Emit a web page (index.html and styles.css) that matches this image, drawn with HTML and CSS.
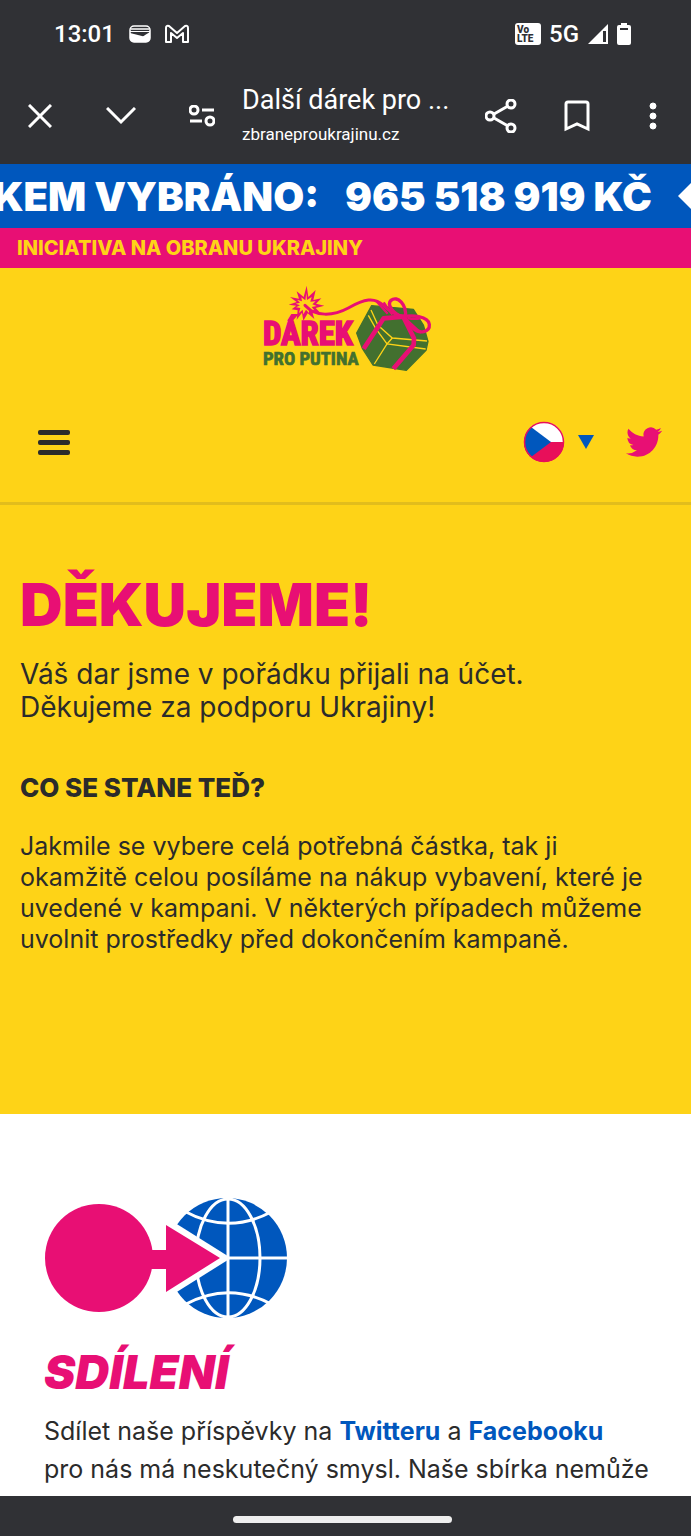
FILE: index.html
```html
<!DOCTYPE html>
<html lang="cs">
<head>
  <meta charset="UTF-8">
  <meta name="viewport" content="width=device-width, initial-scale=1">
  <title>Další dárek pro Putina</title>
  <link rel="stylesheet" href="styles.css">
</head>
<body>

  <!-- Status bar -->
  <div class="status-bar">
    <div class="status-left">
      <span class="clock">13:01</span>
      <svg width="22" height="18" viewBox="0 0 22 18">
        <rect x="1" y="1" width="20" height="16" rx="4" fill="none" stroke="#fff" stroke-width="1.5"/>
        <path d="M2 4h18" stroke="#fff" stroke-width="1.5"/>
        <path d="M1 8l12 3q2 .5 3-1l5-3v6q0 4-4 4H5q-4 0-4-4z" fill="#fff"/>
        <path d="M1 6.5h20" stroke="#fff" stroke-width="1"/>
      </svg>
      <svg width="24" height="20" viewBox="0 0 24 20">
        <path d="M1 18V4q0-3 3-2l8 7 8-7q3-1 3 2v14h-5V9l-6 5-6-5v9z" fill="none" stroke="#fff" stroke-width="2" stroke-linejoin="round"/>
      </svg>
    </div>
    <div class="status-right">
      <span class="volte">Vo<br>LTE</span>
      <span class="network">5G</span>
      <svg width="22" height="22" viewBox="0 0 22 22">
        <path d="M21 1v20H1z" fill="#fff"/>
        <path d="M16 8h3v11h-3z" fill="#303135"/>
      </svg>
      <svg width="14" height="22" viewBox="0 0 14 22">
        <path d="M4 0h6v2h2q2 0 2 2v16q0 2-2 2H2q-2 0-2-2V4q0-2 2-2h2z" fill="#fff"/>
        <path d="M3 6h8" stroke="#303135" stroke-width="2"/>
      </svg>
    </div>
  </div>

  <!-- Browser toolbar -->
  <div class="toolbar">
    <button class="tool-btn" aria-label="Zavřít">
      <svg width="24" height="24" viewBox="0 0 24 24"><path d="M1 1l22 22M23 1L1 23"/></svg>
    </button>
    <button class="tool-btn" aria-label="Minimalizovat">
      <svg width="30" height="18" viewBox="0 0 30 18"><path d="M1 1l14 14L29 1"/></svg>
    </button>
    <button class="tool-btn" aria-label="Informace o webu">
      <svg width="26" height="22" viewBox="0 0 26 22"><circle cx="5" cy="5" r="4"/><path d="M13 5h12M1 16h12"/><circle cx="21" cy="16" r="4"/></svg>
    </button>
    <div class="page-info">
      <div class="page-title">Další dárek pro ...</div>
      <div class="page-url">zbraneproukrajinu.cz</div>
    </div>
    <div class="actions">
      <button class="tool-btn" aria-label="Sdílet">
        <svg width="32" height="34" viewBox="0 0 32 34"><path d="M9 15l14-8M9 19l14 8"/><circle cx="5" cy="17" r="4"/><circle cx="26" cy="5" r="4"/><circle cx="26" cy="29" r="4"/></svg>
      </button>
      <button class="tool-btn" aria-label="Záložka">
        <svg width="26" height="32" viewBox="0 0 26 32"><path d="M2 29V4q0-2 2-2h18q2 0 2 2v25l-11-5z"/></svg>
      </button>
      <button class="tool-btn menu-dots" aria-label="Další možnosti">
        <svg width="8" height="28" viewBox="0 0 8 28"><circle cx="4" cy="4" r="3"/><circle cx="4" cy="14" r="3"/><circle cx="4" cy="24" r="3"/></svg>
      </button>
    </div>
  </div>

  <div class="ticker">
    <span>CELKEM VYBRÁNO:</span>
    <span>965 518 919 KČ</span>
    <svg class="diamond" width="28" height="28" viewBox="0 0 28 28"><path d="M14 0l14 14-14 14L0 14z" fill="#fff"/></svg>
  </div>
  <div class="initiative">INICIATIVA NA OBRANU UKRAJINY</div>

  <header class="header">
    <a href="#" class="logo" aria-label="Dárek pro Putina">
      <svg width="190" height="105" viewBox="0 0 570 315">
        <!-- gift box -->
        <path d="M362 92L487 103 517 150 531 199 525 226 466 286 366 270 334 220 317 174z" fill="#42702f" stroke="#42702f" stroke-width="4" stroke-linejoin="round"/>
        <g fill="none" stroke="#fed317" stroke-width="4">
          <path d="M360 105L381 151 424 189 528 198M352 121L374 160 408 207 524 222"/>
          <path d="M424 189L408 207 370 267M381 148L398 130"/>
        </g>
        <g fill="none" stroke="#e80f74" stroke-linejoin="round">
          <path d="M338 221L398 130 457 125 489 190 488 210 427 281" stroke-width="14"/>
          <path d="M164 93C192 125 246 124 292 99C340 72 370 65 398 92Q420 115 456 125" stroke-width="9"/>
          <path d="M454 125C425 116 407 88 420 76C440 60 468 90 463 126M457 126C480 119 532 123 535 148C537 172 505 178 485 159C475 150 468 137 457 126" stroke-width="10"/>
          <path d="M375 77L410 116M398 82L424 119M460 128L510 174M469 129Q490 134 507 130" stroke-width="7"/>
        </g>
        <!-- spark -->
        <path d="M167 32L172 66 194 45 187 75 211 70 195 86 220 92 194 99 213 119 184 111 190 132 170 115 157 137 153 113 137 134 140 106 122 103 136 92 113 89 137 81 117 66 144 71 137 49 158 66z" fill="#e80f74"/>
        <path d="M166 54L168 75 182 66 178 80 194 79 184 88 197 93 182 96 190 106 174 102 174 114 165 104 157 118 155 104 144 114 148 99 135 97 147 91 134 86 147 83 138 74 153 79 151 67 163 76z" fill="#fed317"/>
        <path d="M162 91L183 110" stroke="#e80f74" stroke-width="9" stroke-linecap="round"/>
        <text x="36" y="211" class="logo-top">DÁREK</text>
        <text x="36" y="270" class="logo-bottom">PRO PUTINA</text>
      </svg>
    </a>
    <nav class="nav">
      <button class="hamburger" aria-label="Menu"><i></i><i></i><i></i></button>
      <div class="nav-right">
        <button class="lang" aria-label="Jazyk: čeština">
          <svg width="42" height="42" viewBox="0 0 42 42">
            <clipPath id="flag"><circle cx="21" cy="21" r="20"/></clipPath>
            <g clip-path="url(#flag)">
              <path d="M0 0h42v21H0z" fill="#fff"/>
              <path d="M0 21h42v21H0z" fill="#e80f5a"/>
              <path d="M0 0L28 21 0 42z" fill="#0057bd"/>
            </g>
            <circle cx="21" cy="21" r="19.5" fill="none" stroke="#e80f5a" stroke-width="1.5"/>
          </svg>
          <svg width="16" height="14" viewBox="0 0 16 14"><path d="M0 0h16L8 14z" fill="#0057bd"/></svg>
        </button>
        <a href="#" class="twitter" aria-label="Twitter">
          <svg width="36" height="36" viewBox="0 0 24 24"><path fill="#e80f74" d="M23.953 4.57a10 10 0 01-2.825.775 4.958 4.958 0 002.163-2.723c-.951.555-2.005.959-3.127 1.184a4.92 4.92 0 00-8.384 4.482C7.69 8.095 4.067 6.13 1.64 3.162a4.822 4.822 0 00-.666 2.475c0 1.71.87 3.213 2.188 4.096a4.904 4.904 0 01-2.228-.616v.06a4.923 4.923 0 003.946 4.827 4.996 4.996 0 01-2.212.085 4.936 4.936 0 004.604 3.417 9.867 9.867 0 01-6.102 2.105c-.39 0-.779-.023-1.17-.067a13.995 13.995 0 007.557 2.209c9.053 0 13.998-7.496 13.998-13.985 0-.21 0-.42-.015-.63A9.935 9.935 0 0024 4.59z"/></svg>
        </a>
      </div>
    </nav>
  </header>

  <main class="thanks">
    <h1>DĚKUJEME!</h1>
    <p class="lead">Váš dar jsme v pořádku přijali na účet.<br>Děkujeme za podporu Ukrajiny!</p>
    <h2>CO SE STANE TEĎ?</h2>
    <p class="text">Jakmile se vybere celá potřebná částka, tak ji<br>okamžitě celou posíláme na nákup vybavení, které je<br>uvedené v kampani. V některých případech můžeme<br>uvolnit prostředky před dokončením kampaně.</p>
  </main>

  <section class="share">
    <svg width="244" height="123" viewBox="0 0 244 123">
      <circle cx="183" cy="61" r="60" fill="#0057bd"/>
      <g fill="none" stroke="#fff" stroke-width="3">
        <path d="M184 0v123M184 61h60"/>
        <ellipse cx="184" cy="61" rx="32" ry="59"/>
        <path d="M140 14Q184 38 227 15M140 108Q184 84 227 107"/>
      </g>
      <path d="M187 61L112 14v94z" fill="#fff"/>
      <circle cx="55" cy="61" r="54" fill="#e80f74"/>
      <path d="M106 53h16V28l54 33-54 34V72h-16z" fill="#e80f74"/>
    </svg>
    <h2>SDÍLENÍ</h2>
    <p>Sdílet naše příspěvky na <a href="#">Twitteru</a> a <a href="#">Facebooku</a><br>pro nás má neskutečný smysl. Naše sbírka nemůže</p>
  </section>

  <div class="gesture-bar"><span></span></div>

</body>
</html>
```
FILE: styles.css
```css
* {
  box-sizing: border-box;
}
body {
  margin: 0;
  min-height: 100vh;
  display: flex;
  flex-direction: column;
  font-family: Inter, sans-serif;
  color: #2b2b2b;
  background: #fff;
  overflow-x: hidden;
}
h1, h2, p {
  margin: 0;
}
button {
  padding: 0;
  border: none;
  background: none;
  cursor: pointer;
}
svg {
  display: block;
  flex-shrink: 0;
}

/* browser */
.status-bar {
  height: 68px;
  padding: 0 60px 0 54px;
  display: flex;
  align-items: center;
  justify-content: space-between;
  background: #303135;
  color: #fff;
  font-family: Roboto, sans-serif;
  font-size: 24px;
  font-weight: 500;
}
.status-left {
  display: flex;
  align-items: center;
  gap: 14px;
}
.status-right {
  display: flex;
  align-items: center;
  gap: 8px;
}
.volte {
  width: 26px;
  height: 22px;
  padding: 2px;
  border-radius: 3px;
  background: #fff;
  color: #303135;
  font-size: 10px;
  line-height: 9px;
  font-weight: 900;
}
.toolbar {
  height: 96px;
  padding: 0 18px 0 20px;
  display: flex;
  align-items: center;
  gap: 41px;
  background: #303135;
  color: #fff;
  font-family: Roboto, sans-serif;
}
.tool-btn {
  width: 40px;
  height: 48px;
  display: flex;
  align-items: center;
  justify-content: center;
}
.tool-btn svg {
  fill: none;
  stroke: #fff;
  stroke-width: 3;
}
.menu-dots svg {
  fill: #fff;
  stroke-width: 1;
}
.page-info {
  flex: 1;
  min-width: 0;
  margin-left: -21px;
  white-space: nowrap;
}
.page-title {
  font-size: 27px;
  line-height: 36px;
}
.page-url {
  font-size: 17px;
  line-height: 32px;
}
.actions {
  display: flex;
  gap: 36px;
  margin-left: -20px;
}

/* top strips */
.ticker {
  height: 64px;
  display: flex;
  align-items: center;
  justify-content: flex-end;
  gap: 26px;
  overflow: hidden;
  white-space: nowrap;
  background: #0057bd;
  color: #fff;
  font-size: 40px;
  font-weight: 900;
}
.diamond {
  margin-right: -15px;
}
.initiative {
  padding: 0 17px;
  background: #e80f74;
  color: #fed317;
  font-size: 20px;
  line-height: 40px;
  font-weight: 800;
}

/* header */
.header {
  padding-top: 7px;
  background: #fed317;
  border-bottom: 3px solid #e2bd1c;
}
.logo {
  display: flex;
  justify-content: center;
}
.logo-top,
.logo-bottom {
  font-family: "Liberation Sans Narrow", "Roboto Condensed", Roboto, sans-serif;
  font-weight: 700;
}
.logo-top {
  font-size: 98px;
  fill: #e80f74;
  stroke: #e80f74;
  stroke-width: 5px;
}
.logo-bottom {
  font-size: 56px;
  fill: #42702f;
  stroke: #42702f;
  stroke-width: 2px;
}
.nav {
  height: 122px;
  padding: 2px 29px 0 38px;
  display: flex;
  align-items: center;
  justify-content: space-between;
}
.hamburger {
  width: 32px;
  display: flex;
  flex-direction: column;
  gap: 5px;
}
.hamburger i {
  height: 5px;
  border-radius: 2px;
  background: #2b2b2b;
}
.nav-right {
  display: flex;
  align-items: center;
  gap: 32px;
}
.lang {
  display: flex;
  align-items: center;
  gap: 13px;
}

/* content */
.thanks {
  min-height: 609px;
  padding: 64px 20px 0;
  background: #fed317;
}
h1 {
  color: #e80f74;
  font-size: 59px;
  line-height: 72px;
  font-weight: 900;
}
.lead {
  margin-top: 17px;
  font-size: 28px;
  line-height: 33px;
}
.thanks h2 {
  margin-top: 48px;
  font-size: 26px;
  line-height: 32px;
  font-weight: 800;
}
.text {
  margin-top: 27px;
  font-size: 25px;
  line-height: 31px;
}
.share {
  flex: 1;
  padding: 83px 44px 0;
}
.share h2 {
  margin-top: 24px;
  color: #e80f74;
  font-size: 47px;
  line-height: 56px;
  font-weight: 900;
  font-style: italic;
}
.share p {
  margin-top: 12px;
  margin-right: -20px;
  font-size: 25px;
  line-height: 38px;
}
.share a {
  color: #0057bd;
  font-weight: 700;
  text-decoration: none;
}
.gesture-bar {
  height: 40px;
  padding: 6px 6px 0 0;
  display: flex;
  align-items: center;
  justify-content: center;
  background: #303135;
}
.gesture-bar span {
  width: 32%;
  height: 7px;
  border-radius: 4px;
  background: #eee;
}
```
